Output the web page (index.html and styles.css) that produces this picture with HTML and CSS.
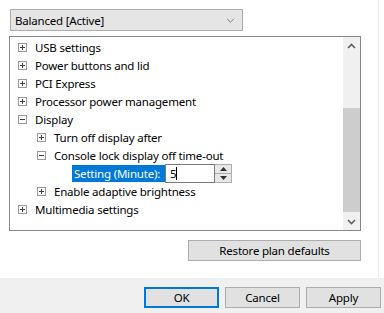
FILE: index.html
```html
<!DOCTYPE html>
<html lang="en">
<head>
  <meta charset="UTF-8" />
  <title>Advanced settings</title>
  <link rel="stylesheet" href="styles.css">
</head>
<body>
  <div class="page">
    <div class="plan-select">
      <span>Balanced [Active]</span>
      <svg class="chevron" viewBox="0 0 10 6" width="9" height="5">
        <path d="M1 1l4 4 4-4" fill="none" stroke="#6a6a6a" stroke-width="1"/>
      </svg>
    </div>

    <div class="tree">
      <ul class="tree-list">
        <li class="row lvl1"><i class="exp plus"></i>USB settings</li>
        <li class="row lvl1"><i class="exp plus"></i>Power buttons and lid</li>
        <li class="row lvl1"><i class="exp plus"></i>PCI Express</li>
        <li class="row lvl1"><i class="exp plus"></i>Processor power management</li>
        <li class="row lvl1"><i class="exp minus"></i>Display</li>
        <li class="row lvl2"><i class="exp plus"></i>Turn off display after</li>
        <li class="row lvl2"><i class="exp minus"></i>Console lock display off time-out</li>
        <li class="row lvl3">
          <span class="selected">Setting (Minute):</span>
          <span class="spin-input">5<span class="caret"></span></span>
          <span class="spin-buttons">
            <span class="spin-btn"><svg viewBox="0 0 7 4" width="7" height="4"><path d="M0 4h7L3.5 0z" fill="#333"/></svg></span>
            <span class="spin-btn"><svg viewBox="0 0 7 4" width="7" height="4"><path d="M0 0h7L3.5 4z" fill="#333"/></svg></span>
          </span>
        </li>
        <li class="row lvl2"><i class="exp plus"></i>Enable adaptive brightness</li>
        <li class="row lvl1"><i class="exp plus"></i>Multimedia settings</li>
      </ul>
      <div class="scrollbar">
        <div class="arrow">
          <svg viewBox="0 0 9 6" width="9" height="6"><path d="M1 5l3.5-3.5L8 5" fill="none" stroke="#606060" stroke-width="1.6"/></svg>
        </div>
        <div class="track">
          <div class="thumb"></div>
        </div>
        <div class="arrow">
          <svg viewBox="0 0 9 6" width="9" height="6"><path d="M1 1l3.5 3.5L8 1" fill="none" stroke="#606060" stroke-width="1.6"/></svg>
        </div>
      </div>
    </div>

    <div class="restore-row">
      <button class="btn restore">Restore plan defaults</button>
    </div>
  </div>

  <div class="footer">
    <button class="btn default">OK</button>
    <button class="btn">Cancel</button>
    <button class="btn">Apply</button>
  </div>
</body>
</html>
```

FILE: styles.css
```css
body {
  margin: 0;
  font-family: 'Noto Sans', 'Open Sans', Arial, sans-serif;
  font-size: 11.5px;
  letter-spacing: -0.2px;
  color: #000;
  background-color: #fff;
  width: 384px;
  height: 313px;
  overflow: hidden;
}

.page {
  height: 278px;
  box-sizing: border-box;
  padding-top: 9px;
  border-right: 1px solid #ececec;
  width: 379px;
}

.plan-select {
  margin-left: 10px;
  width: 233px;
  height: 22px;
  box-sizing: border-box;
  background-color: #e5e5e5;
  border: 1px solid #adadad;
  display: flex;
  align-items: center;
  justify-content: space-between;
  padding: 0 7px 0 4px;
}

.tree {
  margin: 5px 0 0 9px;
  width: 352px;
  height: 195px;
  box-sizing: border-box;
  border: 1px solid #828790;
  display: flex;
}

.tree-list {
  list-style: none;
  margin: 0;
  padding: 1px 0 0 0;
  flex: 1;
}

.row {
  height: 18px;
  display: flex;
  align-items: center;
  white-space: nowrap;
}

.lvl1 { padding-left: 8px; }
.lvl2 { padding-left: 27px; }
.lvl3 { padding-left: 62px; }

.exp {
  width: 9px;
  height: 9px;
  box-sizing: border-box;
  border: 1px solid #9a9a9a;
  margin-right: 8px;
  position: relative;
  flex: none;
}

.exp::before {
  content: "";
  position: absolute;
  left: 1px;
  top: 3px;
  width: 5px;
  height: 1px;
  background-color: #404040;
}

.exp.plus::after {
  content: "";
  position: absolute;
  left: 3px;
  top: 1px;
  width: 1px;
  height: 5px;
  background-color: #404040;
}

.selected {
  background-color: #0078d7;
  color: #fff;
  height: 17px;
  line-height: 17px;
  width: 93px;
  box-sizing: border-box;
  padding-left: 2px;
}

.spin-input {
  width: 50px;
  height: 19px;
  box-sizing: border-box;
  border: 1px solid #7a7a7a;
  padding-left: 4px;
  line-height: 17px;
  display: flex;
  align-items: center;
}

.caret {
  width: 1px;
  height: 13px;
  background-color: #000;
}

.spin-buttons {
  display: flex;
  flex-direction: column;
  height: 19px;
  width: 17px;
  box-sizing: border-box;
  border: 1px solid #adadad;
  border-left: none;
}

.spin-btn {
  flex: 1;
  display: flex;
  align-items: center;
  justify-content: center;
  background-color: #e8e8e8;
}

.spin-btn + .spin-btn {
  border-top: 1px solid #adadad;
}

.scrollbar {
  width: 17px;
  background-color: #f0f0f0;
  display: flex;
  flex-direction: column;
}

.arrow {
  height: 17px;
  display: flex;
  align-items: center;
  justify-content: center;
}

.track {
  flex: 1;
  padding-top: 54px;
  box-sizing: border-box;
}

.thumb {
  height: 104px;
  background-color: #cdcdcd;
}

.restore-row {
  display: flex;
  justify-content: flex-end;
  padding-right: 17px;
  margin-top: 9px;
}

.btn {
  font-family: 'Noto Sans', 'Open Sans', Arial, sans-serif;
  font-size: 11.5px;
  letter-spacing: -0.2px;
  color: #000;
  background-color: #e1e1e1;
  border: 1px solid #adadad;
  height: 21px;
  width: 75px;
  padding: 0;
  box-sizing: border-box;
}

.btn.restore {
  width: 173px;
}

.btn.default {
  border: 2px solid #0078d7;
}

.footer {
  height: 35px;
  background-color: #f0f0f0;
  display: flex;
  justify-content: flex-end;
  align-items: flex-start;
  gap: 6px;
  padding: 9px 3px 0 0;
  box-sizing: border-box;
}
```
